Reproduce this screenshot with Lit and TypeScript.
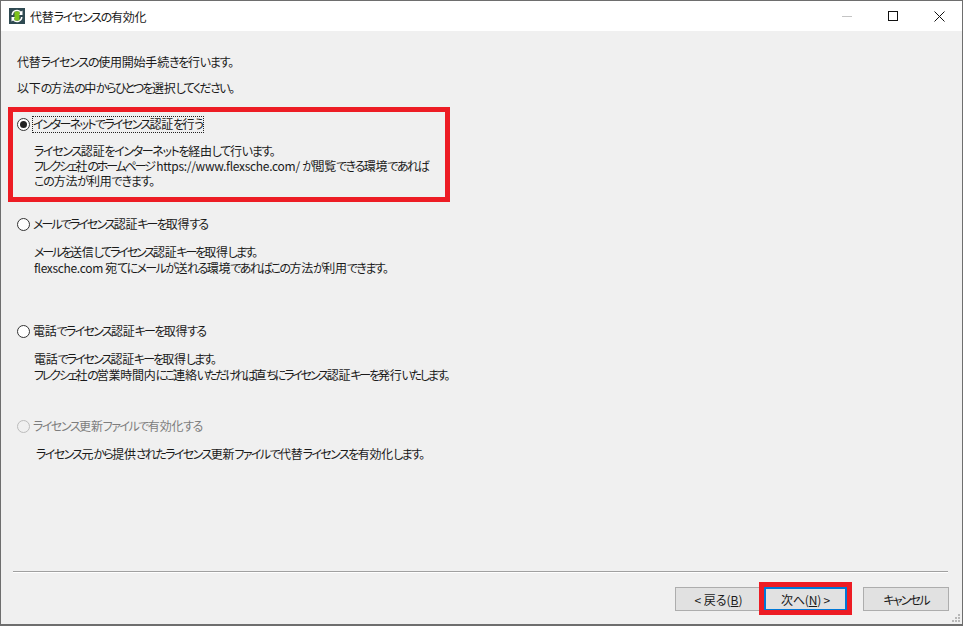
import { LitElement, html, css, svg } from "lit";
import { customElement } from "lit/decorators.js";

type Seg = [string, number];
interface Opt { label: Seg; lines: Seg[][]; cls: string; disabled?: boolean; checked?: boolean; }
const OPTS: Opt[] = [
  { label: ["インターネットでライセンス認証を行う", -1.44], cls: "o1", checked: true, lines: [
    [["ライセンス認証をインターネットを経由して行います。", -1.12]],
    [["フレクシェ社のホームページ", -2], [" https://www.flexsche.com/ ", -0.3], ["が閲覧できる環境であれば", -1.05]],
    [["この方法が利用できます。", -0.83]] ] },
  { label: ["メールでライセンス認証キーを取得する", -1.55], cls: "o2", lines: [
    [["メールを送信してライセンス認証キーを取得します。", -1.67]],
    [["flexsche.com ", -0.33], ["宛てにメールが送れる環境であればこの方法が利用できます。", -1.2]] ] },
  { label: ["電話でライセンス認証キーを取得する", -1.18], cls: "o3", lines: [
    [["電話でライセンス認証キーを取得します。", -1.42]],
    [["フレクシェ社の営業時間内にご連絡いただければ直ちにライセンス認証キーを発行いたします。", -1.58]] ] },
  { label: ["ライセンス更新ファイルで有効化する", -1.12], cls: "o4", disabled: true, lines: [
    [["ライセンス元から提供されたライセンス更新ファイルで代替ライセンスを有効化します。", -1.25]] ] },
];

/* Kanji stay almost full width as in Meiryo UI; the rest of a segment's reduction goes to kana. */
const KANJI_LS = -0.2;
const seg = ([text, ls]: Seg) => {
  const runs = text.match(/[\u4e00-\u9fff]+|[^\u4e00-\u9fff]+/g) ?? [];
  const k = runs.filter(r => /[\u4e00-\u9fff]/.test(r)).join("").length;
  const rest = text.length - k;
  const kanaLs = rest ? (ls * text.length - KANJI_LS * k) / rest : 0;
  return runs.map(r => html`<span style="letter-spacing:${/[\u4e00-\u9fff]/.test(r) ? KANJI_LS : kanaLs.toFixed(2)}px">${r}</span>`);
};

@customElement("app-root")
export class AppRoot extends LitElement {
  static styles = css`
    :host { display: block; width: 963px; height: 626px; font-family: "Noto Sans CJK JP", "Open Sans", sans-serif; font-size: 12px; color: #1a1a1a; font-feature-settings: "palt"; }
    .win { position: relative; box-sizing: border-box; width: 963px; height: 626px; border: 1px solid #6e6e6e; border-bottom-width: 2px; background: #f0f0f0; display: flex; flex-direction: column; }
    .title { height: 30px; flex: none; background: #fff; display: flex; align-items: center; padding-left: 8px; }
    .title .ico { width: 16px; height: 16px; margin-right: 5px; }
    .title .t { flex: 1; }
    .caps { display: flex; align-self: stretch; }
    .cap { width: 46px; display: flex; align-items: center; justify-content: center; }
    .body { flex: 1; padding: 23px 0 0 16px; display: flex; flex-direction: column; }
    .intro { margin: 0; height: 26px; line-height: 16px; }
    .options { margin-top: 9px; }
    .opt { position: relative; }
    .o1 { height: 100px; }
    .o2 { height: 107px; }
    .o3 { height: 95px; }
    .head { display: flex; align-items: center; height: 18px; line-height: 16px; }
    .radio { width: 11px; height: 11px; border: 1px solid #333; border-radius: 50%; background: #fff; margin: 0 2px 0 0; flex: none; display: flex; align-items: center; justify-content: center; }
    .dot { width: 7px; height: 7px; border-radius: 50%; background: #222; }
    .lab { padding: 0 1px; }
    .focus { outline: 1px dotted #222; outline-offset: -1px; padding: 0 1px 1px; }
    .disabled .radio { border-color: #bcbcbc; background: #f0f0f0; }
    .disabled .lab { color: #7d7d7d; }
    .desc { margin: 11px 0 0 17px; line-height: 16px; white-space: pre; }
    .o1 .desc { margin-top: 10px; line-height: 15.2px; }
    .o4 .desc { margin-left: 19px; }
    .o1::after { content: ""; position: absolute; left: -9px; top: -8px; width: 442px; height: 95px; border: 5px solid #ed1c24; box-sizing: border-box; }
    .spacer { flex: 1; }
    .sep { height: 1px; margin-right: 14px; margin-left: -4px; background: #a0a0a0; border-bottom: 1px solid #fff; }
    .footer { display: flex; justify-content: flex-end; padding: 14px 13px 13px 0; }
    .btn { position: relative; box-sizing: border-box; height: 24px; display: flex; align-items: center; justify-content: center; background: #e1e1e1; border: 1px solid #adadad; white-space: pre; }
    .back { width: 85px; margin-right: 4px; padding-left: 2px; }
    .next { width: 83px; margin-right: 16px; border: 2px solid #0078d7; letter-spacing: -0.2px; }
    .cancel { width: 86px; letter-spacing: -1.8px; }
    .next::after { content: ""; position: absolute; left: -7px; top: -7px; width: 93px; height: 33px; border: 5px solid #ed1c24; box-sizing: border-box; }
    u { text-underline-offset: 1px; }
    .grip { position: absolute; right: 1px; bottom: 1px; }
  `;

  private logo() {
    return html`<svg class="ico" viewBox="0 0 16 16">
      <rect width="16" height="16" fill="#2f4a52"/>
      ${svg`<path d="M2.5 7 A5.5 5.5 0 0 1 12 3.5 L13.5 2.5 V7 H9.5 L11 5 A3.8 3.8 0 0 0 4 7Z M13.5 9 A5.5 5.5 0 0 1 4 12.5 L2.5 13.5 V9 H6.5 L5 11 A3.8 3.8 0 0 0 12 9Z" fill="#fff"/>`}
      <rect x="5.5" y="3.5" width="5" height="9" fill="#7ec31c"/>
    </svg>`;
  }

  render() {
    return html`<div class="win">
      <div class="title">
        ${this.logo()}
        <span class="t">${seg(["代替ライセンスの有効化", -0.8])}</span>
        <div class="caps">
          <div class="cap"><svg width="10" height="10"><path d="M0 5.5H10" stroke="#c4c4c4" fill="none"/></svg></div>
          <div class="cap"><svg width="10" height="10"><rect x=".5" y=".5" width="9" height="9" stroke="#111" fill="none"/></svg></div>
          <div class="cap"><svg width="11" height="11"><path d="M.5 .5L10.5 10.5M10.5 .5L.5 10.5" stroke="#111" fill="none"/></svg></div>
        </div>
      </div>
      <div class="body">
        <p class="intro">${seg(["代替ライセンスの使用開始手続きを行います。", -0.81])}</p>
        <p class="intro">${seg(["以下の方法の中からひとつを選択してください。", -1.14])}</p>
        <div class="options">
          ${OPTS.map(o => html`<div class="opt ${o.cls} ${o.disabled ? "disabled" : ""}">
            <div class="head">
              <span class="radio">${o.checked ? html`<span class="dot"></span>` : ""}</span>
              <span class="lab ${o.checked ? "focus" : ""}">${seg(o.label)}</span>
            </div>
            <div class="desc">${o.lines.map(l => html`<div>${l.map(seg)}</div>`)}</div>
          </div>`)}
        </div>
        <div class="spacer"></div>
        <div class="sep"></div>
        <div class="footer">
          <div class="btn back">&lt; 戻る(<u>B</u>)</div>
          <div class="btn next">次へ(<u>N</u>) &gt;</div>
          <div class="btn cancel">キャンセル</div>
        </div>
      </div>
      <svg class="grip" width="9" height="9" fill="#b8b8b8">
        <rect x="6" y="0" width="2" height="2"/><rect x="3" y="3" width="2" height="2"/><rect x="6" y="3" width="2" height="2"/>
        <rect x="0" y="6" width="2" height="2"/><rect x="3" y="6" width="2" height="2"/><rect x="6" y="6" width="2" height="2"/>
      </svg>
    </div>`;
  }
}
